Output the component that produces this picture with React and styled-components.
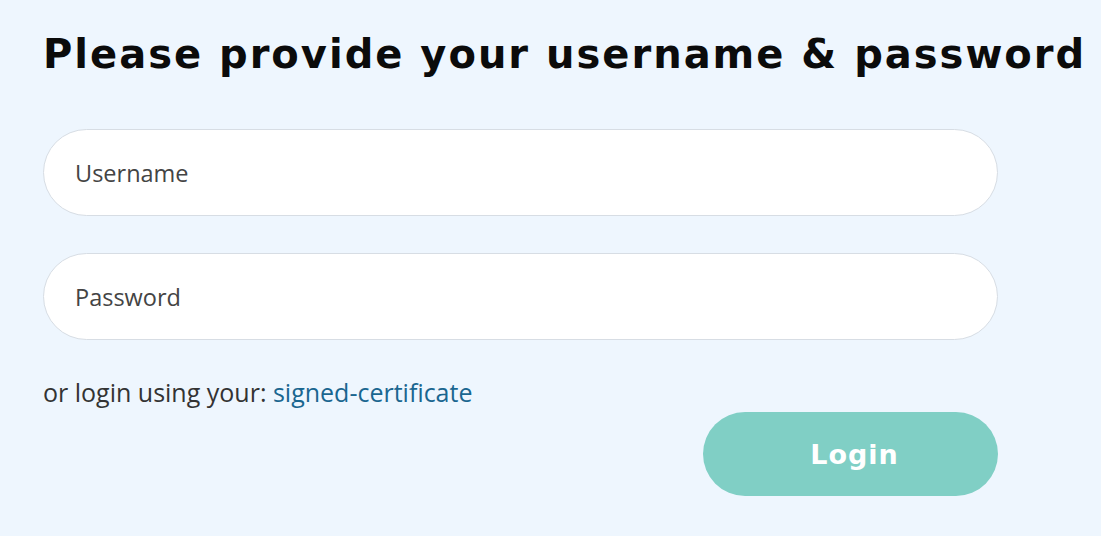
import React, { useState } from 'react';
import styled, { createGlobalStyle } from 'styled-components';

const GlobalStyle = createGlobalStyle`
  html, body {
    margin: 0;
    padding: 0;
    background: #eef6fe;
  }
  * { box-sizing: border-box; }
`;

const Page = styled.div`
  min-height: 536px;
  padding: 24px 0 0 43px;
  font-family: 'Open Sans', sans-serif;
  background: #eef6fe;
`;

const Title = styled.h1`
  margin: 0;
  font-family: 'DejaVu Sans', sans-serif;
  font-weight: 700;
  font-size: 40px;
  line-height: 60px;
  color: #0b0b0b;
  white-space: nowrap;
  letter-spacing: 2px;
`;

const Form = styled.form`
  width: 955px;
  margin-top: 45px;
  display: flex;
  flex-direction: column;
  gap: 37px;
`;

const Input = styled.input`
  width: 100%;
  height: 87px;
  padding: 0 31px;
  border: 1px solid #d7dde4;
  border-radius: 44px;
  background: #fff;
  font-family: 'Open Sans', sans-serif;
  font-size: 23.5px;
  color: #333;
  outline: none;

  &::placeholder {
    color: #444;
  }
`;

const Footer = styled.div`
  display: flex;
  flex-direction: column;
  margin-top: -1px;
`;

const Alt = styled.p`
  margin: 0;
  font-size: 25px;
  line-height: 32px;
  color: #333;
`;

const CertLink = styled.a`
  color: #1a6690;
  text-decoration: none;
  cursor: pointer;
`;

const Actions = styled.div`
  display: flex;
  justify-content: flex-end;
  margin-top: 4px;
`;

const LoginButton = styled.button`
  width: 295px;
  height: 84px;
  padding: 0 0 0 8px;
  border: none;
  border-radius: 42px;
  background: #80cfc5;
  color: #fff;
  font-family: 'DejaVu Sans', sans-serif;
  font-weight: 700;
  font-size: 27px;
  letter-spacing: 1px;
  cursor: pointer;
`;

export default function App() {
  const [form, setForm] = useState({ username: '', password: '' });

  const handleChange = (e) => {
    const { name, value } = e.target;
    setForm({ ...form, [name]: value });
  };

  return (
    <Page>
      <GlobalStyle />
      <Title>Please provide your username &amp; password</Title>
      <Form onSubmit={(e) => e.preventDefault()}>
        <Input
          name="username"
          placeholder="Username"
          value={form.username}
          onChange={handleChange}
        />
        <Input
          type="password"
          name="password"
          placeholder="Password"
          value={form.password}
          onChange={handleChange}
        />
        <Footer>
          <Alt>
            or login using your: <CertLink>signed-certificate</CertLink>
          </Alt>
          <Actions>
            <LoginButton type="submit">Login</LoginButton>
          </Actions>
        </Footer>
      </Form>
    </Page>
  );
}
